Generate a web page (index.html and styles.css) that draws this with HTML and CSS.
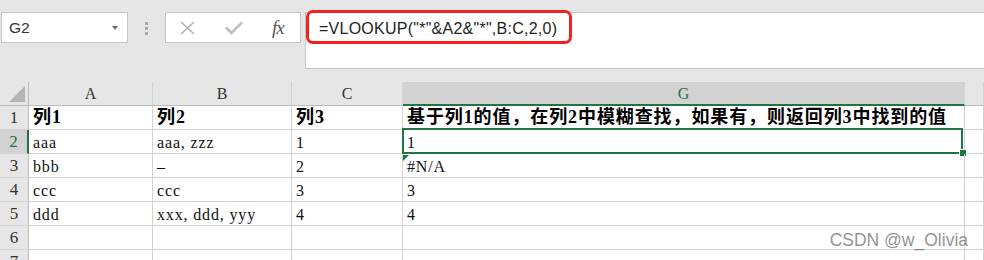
FILE: index.html
```html
<!DOCTYPE html>
<html lang="zh-CN">
<head>
    <meta charset="UTF-8">
    <title>VLOOKUP 模糊查找</title>
    <link rel="stylesheet" href="styles.css">
</head>
<body>
    <!-- Name box, buttons and formula bar -->
    <div class="toolbar">
        <div class="namebox">
            <span>G2</span>
            <span class="arrow"></span>
        </div>
        <div class="grip">
            <span class="dot"></span>
            <span class="dot"></span>
            <span class="dot"></span>
        </div>
        <div class="tools">
            <svg class="icon-x" width="15" height="14" viewBox="0 0 15 14">
                <path d="M1 1 L14 13 M14 1 L1 13" stroke="#b4b4b4" stroke-width="1.7" fill="none"/>
            </svg>
            <svg class="icon-ok" width="18" height="14" viewBox="0 0 18 14">
                <path d="M1 6.5 L6.5 12 L17 1.5" stroke="#bdbdbd" stroke-width="2.6" fill="none"/>
            </svg>
            <span class="fx">fx</span>
        </div>
        <div class="formula">
            <span class="mark"></span>
            =VLOOKUP("*"&amp;A2&amp;"*",B:C,2,0)
        </div>
    </div>

    <!-- Sheet grid -->
    <div class="sheet">
        <div class="hd corner"><span class="tri"></span></div>
        <div class="hd">A</div>
        <div class="hd">B</div>
        <div class="hd">C</div>
        <div class="hd sel-col">G</div>
        <div class="hd"></div>

        <div class="rh">1</div>
        <div class="c bold">列1</div>
        <div class="c bold">列2</div>
        <div class="c bold">列3</div>
        <div class="c bold">基于列1的值，在列2中模糊查找，如果有，则返回列3中找到的值</div>
        <div class="c"></div>

        <div class="rh sel-row">2</div>
        <div class="c">aaa</div>
        <div class="c">aaa, zzz</div>
        <div class="c">1</div>
        <div class="c active">1</div>
        <div class="c"></div>

        <div class="rh">3</div>
        <div class="c">bbb</div>
        <div class="c">–</div>
        <div class="c">2</div>
        <div class="c err">#N/A</div>
        <div class="c"></div>

        <div class="rh">4</div>
        <div class="c">ccc</div>
        <div class="c">ccc</div>
        <div class="c">3</div>
        <div class="c">3</div>
        <div class="c"></div>

        <div class="rh">5</div>
        <div class="c">ddd</div>
        <div class="c">xxx, ddd, yyy</div>
        <div class="c">4</div>
        <div class="c">4</div>
        <div class="c"></div>

        <div class="rh">6</div>
        <div class="c"></div>
        <div class="c"></div>
        <div class="c"></div>
        <div class="c"></div>
        <div class="c"></div>

        <div class="rh">7</div>
        <div class="c"></div>
        <div class="c"></div>
        <div class="c"></div>
        <div class="c"></div>
        <div class="c"></div>
    </div>

    <div class="watermark">CSDN @w_Olivia</div>
</body>
</html>
```

FILE: styles.css
```css
/* Page */
body {
    margin: 0;
    background-color: #ffffff;
    overflow: hidden;
    height: 260px;
    position: relative;
}

/* Top bar: name box, buttons, formula */
.toolbar {
    height: 82px;
    box-sizing: border-box;
    padding-top: 12px;
    background-color: #e6e6e6;
    display: flex;
    align-items: flex-start;
}

.namebox {
    margin-left: 1px;
    width: 127px;
    height: 31px;
    box-sizing: border-box;
    background-color: #ffffff;
    border: 1px solid #c6c6c6;
    display: flex;
    align-items: center;
    justify-content: space-between;
    padding: 0 9px 0 7px;
    font-family: "Liberation Sans", sans-serif;
    font-size: 15.5px;
    color: #333;
}

.arrow {
    width: 0;
    height: 0;
    border-left: 3.5px solid transparent;
    border-right: 3.5px solid transparent;
    border-top: 4px solid #707070;
}

.grip {
    width: 37px;
    padding-top: 10px;
    display: flex;
    flex-direction: column;
    align-items: center;
    gap: 2px;
}

.dot {
    width: 3px;
    height: 3px;
    background-color: #a8a8a8;
}

.tools {
    width: 136px;
    height: 31px;
    box-sizing: border-box;
    background-color: #ffffff;
    border: 1px solid #c6c6c6;
    display: flex;
    align-items: center;
    padding-left: 14px;
}

.icon-ok {
    margin-left: 30px;
}

.fx {
    margin-left: 29px;
    font-family: "Liberation Serif", serif;
    font-style: italic;
    font-size: 19px;
    color: #555;
    letter-spacing: -1px;
}

.formula {
    flex: 1;
    margin-left: 4px;
    height: 57px;
    box-sizing: border-box;
    background-color: #ffffff;
    border: 1px solid #c6c6c6;
    border-right: none;
    position: relative;
    padding: 5px 0 0 13px;
    line-height: 22px;
    font-family: "Liberation Sans", sans-serif;
    font-size: 16px;
    letter-spacing: 0.25px;
    color: #222;
}

/* Red highlight drawn over the formula */
.mark {
    position: absolute;
    left: 0;
    top: -3px;
    width: 266px;
    height: 34px;
    box-sizing: border-box;
    border: 3px solid #f41f1f;
    border-radius: 7px;
}

/* Grid */
.sheet {
    display: grid;
    grid-template-columns: 29px 124px 139px 111px 562px 1fr;
    grid-auto-rows: 24px;
    font-family: "Liberation Serif", "Noto Sans CJK SC", serif;
    font-size: 16px;
    color: #111;
}

.sheet > div {
    box-sizing: border-box;
    border-right: 1px solid #d4d4d4;
    border-bottom: 1px solid #d4d4d4;
}

.hd {
    background-color: #e6e6e6;
    border-bottom-color: #bcbcbc !important;
    text-align: center;
    line-height: 24px;
    color: #333;
}

.corner {
    position: relative;
    border-right-color: #bcbcbc !important;
}

.tri {
    position: absolute;
    right: 3px;
    bottom: 3px;
    width: 16px;
    height: 16px;
    background-color: #b4b4b4;
    clip-path: polygon(100% 0, 100% 100%, 0 100%);
}

.sel-col {
    background-color: #d2d2d2;
    color: #217346;
    border-bottom: 2px solid #217346 !important;
}

.rh {
    background-color: #e6e6e6;
    border-right-color: #bcbcbc !important;
    text-align: center;
    line-height: 23px;
    color: #333;
    font-size: 17px;
}

.sel-row {
    background-color: #d2d2d2;
    color: #217346;
    border-right: 2px solid #217346 !important;
}

.c {
    padding: 1px 0 0 4px;
    line-height: 23px;
    letter-spacing: 0.85px;
    white-space: nowrap;
}

.bold {
    font-weight: bold;
    font-size: 18px;
    letter-spacing: 0.9px;
    color: #000;
    padding-top: 0;
}

/* Active cell G2 */
.active {
    position: relative;
}

.active::before {
    content: "";
    position: absolute;
    top: -2px;
    left: -1px;
    right: 1px;
    bottom: -1px;
    border: 2px solid #217346;
}

.active::after {
    content: "";
    position: absolute;
    right: -3px;
    bottom: -4px;
    width: 6px;
    height: 6px;
    background-color: #217346;
    border: 1px solid #ffffff;
}

/* Error indicator on G3 */
.err {
    position: relative;
}

.err::before {
    content: "";
    position: absolute;
    left: 0;
    top: 1px;
    width: 6px;
    height: 6px;
    background-color: #217346;
    clip-path: polygon(0 0, 100% 0, 0 100%);
}

.watermark {
    position: absolute;
    right: 16px;
    top: 229px;
    line-height: 22px;
    font-family: "Liberation Sans", sans-serif;
    font-size: 17.5px;
    color: rgba(110, 110, 110, 0.75);
}
```
